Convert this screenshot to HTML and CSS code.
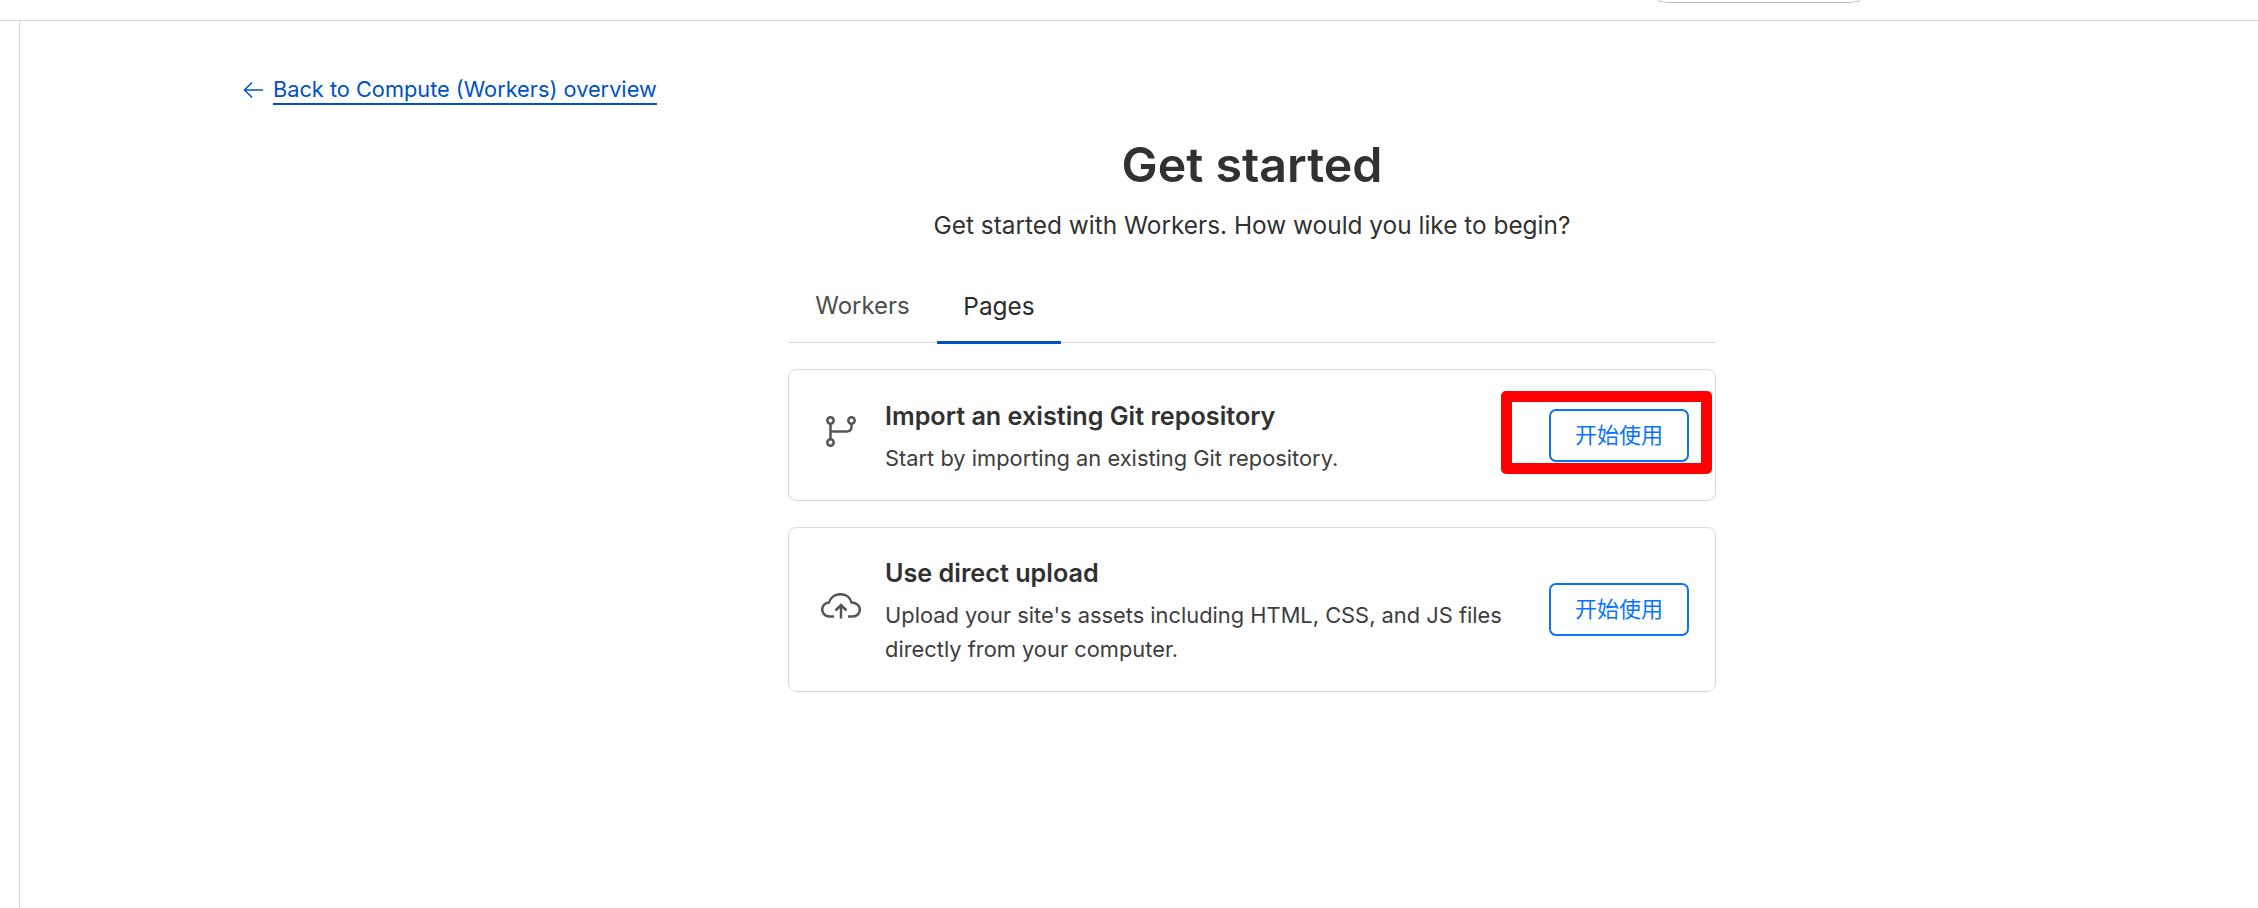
FILE: index.html
```html
<!DOCTYPE html>
<html lang="en">
<head>
<meta charset="utf-8">
<title>Get started</title>
<link rel="stylesheet" href="styles.css">
</head>
<body>
<header class="topbar"><div class="pill"></div></header>
<div class="shell">
  <aside class="rail"></aside>
  <main class="main">
    <div class="back">
      <svg class="back-icon" viewBox="0 0 20 18" width="20" height="18" fill="none" stroke="currentColor" stroke-width="1.5"><path d="M20 9H1.500M9 1.500 1.500 9 9 16.500"/></svg>
      <a class="back-link" href="#">Back to Compute (Workers) overview</a>
    </div>
    <section class="column">
      <h1 class="title">Get started</h1>
      <p class="subtitle">Get started with Workers. How would you like to begin?</p>
      <nav class="tabs">
        <span class="tab">Workers</span>
        <span class="tab tab-active">Pages</span>
      </nav>
      <div class="cards">
        <article class="card card-git">
          <div class="card-icon">
            <svg viewBox="0 0 30 31" width="30" height="31" fill="none" stroke="#555" stroke-width="2.500"><circle cx="4.500" cy="4.500" r="3.200"/><circle cx="4.500" cy="26.500" r="3.200"/><circle cx="25.500" cy="4.500" r="3.200"/><path d="M4.500 7.700v15.600M4.500 15.500h16q5 0 5-5V7.700"/></svg>
          </div>
          <div class="card-text">
            <h2 class="card-title">Import an existing Git repository</h2>
            <p class="card-desc">Start by importing an existing Git repository.</p>
          </div>
          <button class="start-btn">开始使用</button>
          <div class="annotation"></div>
        </article>
        <article class="card card-upload">
          <div class="card-icon">
            <svg viewBox="0 0 40 26" width="40" height="26" fill="none" stroke="#555" stroke-width="2.500"><path d="M13 23.500H8.500C4.500 23.500 1.200 20.500 1.200 16.500c0-3.800 3-6.800 6.800-7C9.500 4.500 14 1.200 19.500 1.200c5.500 0 9.800 3.500 11 8.300 4.500 0 8.300 2.800 8.300 7 0 4-3 7-7 7H27"/><path d="M20 25.500V12M14.500 17.500 20 12l5.500 5.500"/></svg>
          </div>
          <div class="card-text">
            <h2 class="card-title">Use direct upload</h2>
            <p class="card-desc">Upload your site's assets including HTML, CSS, and JS files<br>directly from your computer.</p>
          </div>
          <button class="start-btn">开始使用</button>
        </article>
      </div>
    </section>
  </main>
</div>
</body>
</html>
```
FILE: styles.css
```css
* { box-sizing: border-box; }
html, body { margin: 0; height: 100%; overflow: hidden; background: #fff; }
body { font-family: Inter, "Noto Sans CJK SC", sans-serif; color: #313131; }

.topbar { height: 21px; border-bottom: 1px solid #d9d9d9; display: flex; justify-content: flex-end; padding-right: 398px; }
.pill { width: 202px; height: 3px; border: 1px solid #b5b5b5; border-top: 0; border-radius: 0 0 14px 14px / 0 0 3px 3px; }

.shell { display: flex; height: 887px; }
.rail { width: 20px; border-right: 1px solid #d9d9d9; flex: none; }
.main { flex: 1; padding: 54px 0 0 223px; }

.back { display: flex; align-items: center; gap: 10px; height: 30px; color: #0051c3; }
.back-icon { flex: none; }
.back-link { font-size: 21.75px; line-height: 28px; color: #0051c3; text-decoration: none; border-bottom: 2px solid #0051c3; white-space: nowrap; }

.column { width: 928px; margin: 0 0 0 545px; }
.title { margin: 0; padding-top: 30px; font-size: 48.3px; line-height: 60px; font-weight: 600; text-align: center; color: #313131; }
.subtitle { margin: 14px 0 0; font-size: 24.4px; line-height: 32px; text-align: center; color: #313131; }

.tabs { display: flex; margin-top: 35px; height: 67px; border-bottom: 1px solid #d9d9d9; }
.tab { width: 149px; font-size: 24px; line-height: 60px; text-align: center; color: #4e4e4e; }
.tab-active { width: 124px; color: #2b2b2b; font-size: 24.4px; border-bottom: 3px solid #0051c3; height: 68px; }

.cards { display: flex; flex-direction: column; gap: 26px; margin-top: 26px; }
.card { position: relative; display: flex; align-items: center; border: 1px solid #d9d9d9; border-radius: 8px; padding: 0 26px 0 0; }
.card-git { height: 132px; }
.card-upload { height: 165px; }
.card-icon { flex: none; width: 96px; padding: 0 0 8px 7px; display: flex; justify-content: center; }
.card-text { flex: 1; padding-top: 3px; }
.card-title { margin: 0; font-size: 25.2px; line-height: 34px; font-weight: 600; color: #313131; }
.card-desc { margin: 8px 0 0; font-size: 21.85px; line-height: 34px; color: #3d3d3d; }

.start-btn { flex: none; width: 140px; height: 53px; padding: 0 0 5px; background: #fff; border: 2px solid #0a74ff; border-radius: 7px; color: #0a74ff; font-family: inherit; font-size: 22px; }

.annotation { position: absolute; left: 712px; top: 21px; width: 211px; height: 83px; border: 11px solid #ff0000; border-radius: 5px; pointer-events: none; }
```
